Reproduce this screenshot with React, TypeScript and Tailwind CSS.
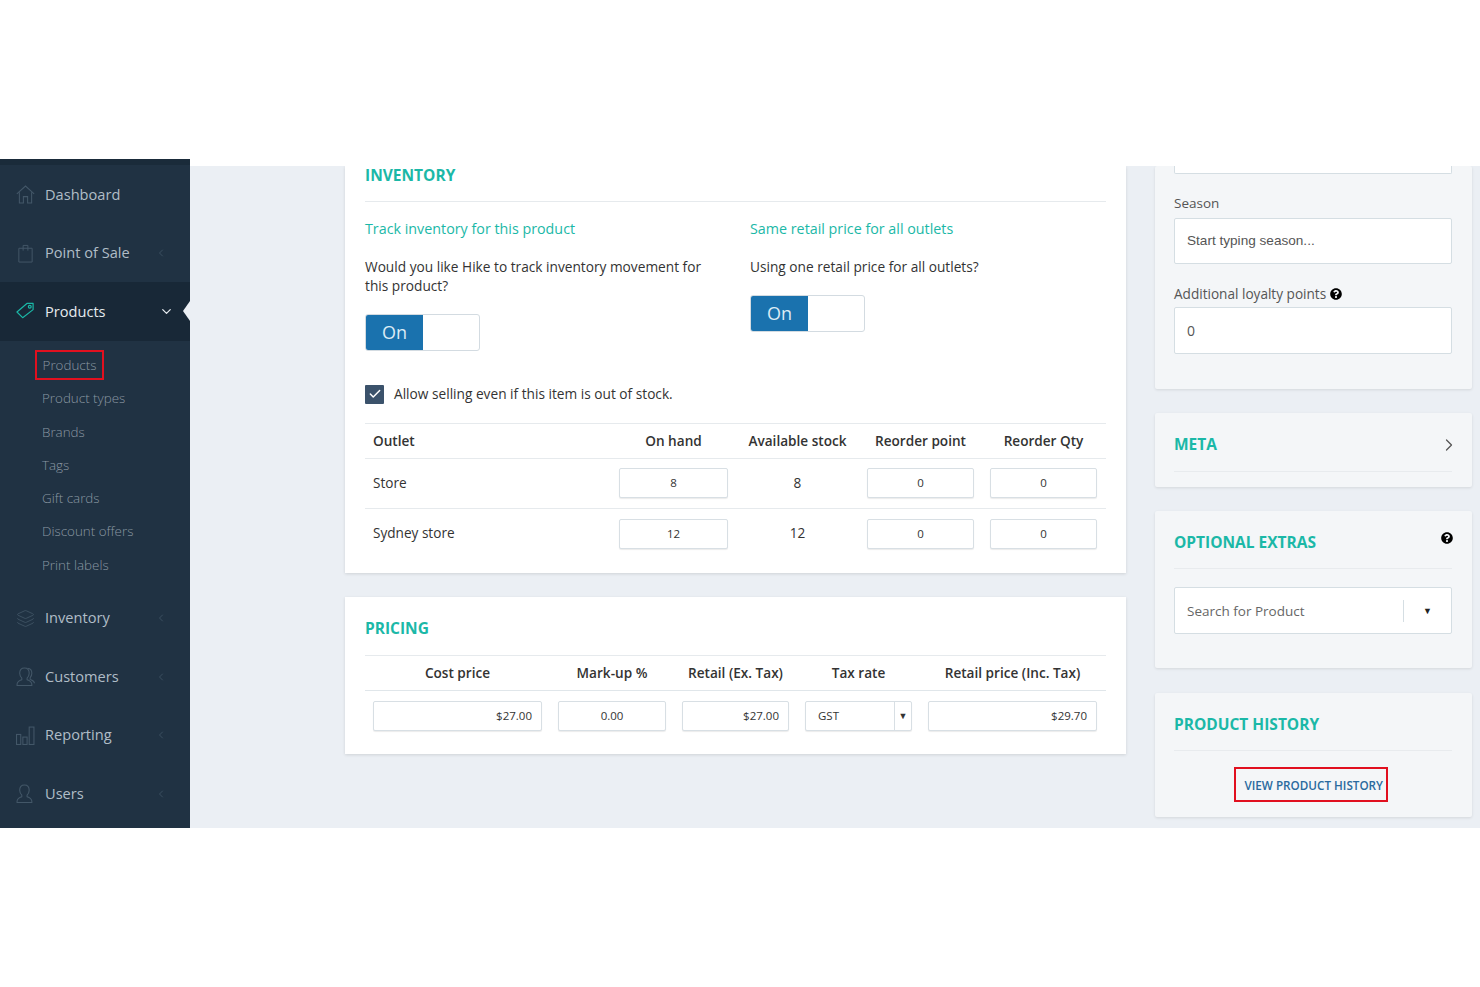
import { Check, ChevronDown, ChevronLeft, ChevronRight, Layers } from "lucide-react";
import { FaQuestionCircle } from "react-icons/fa";

function HouseIcon() {
  return (
    <svg viewBox="0 0 18 18" className="size-[19px]" fill="none" stroke="currentColor" strokeWidth="1">
      <path d="M.8 8.5 9 1l8.2 7.5" />
      <path d="M3.2 6.8V17H7v-6h4v6h3.8V6.8" />
    </svg>
  );
}

function BagIcon() {
  return (
    <svg viewBox="0 0 18 20" className="size-[19px]" fill="none" stroke="currentColor" strokeWidth="1">
      <path d="M2 4.5h14v14.5H2z" />
      <path d="M6.5 7V1.5h5V7" />
    </svg>
  );
}

function BarsIcon() {
  return (
    <svg viewBox="0 0 18 18" className="size-[19px]" fill="none" stroke="currentColor" strokeWidth="1">
      <rect x="0.5" y="8" width="4" height="9.5" />
      <rect x="6.5" y="10.5" width="4" height="7" />
      <rect x="12.5" y="1" width="4.5" height="16.5" />
    </svg>
  );
}

const personPath =
  "M8 1C5 1 3.5 3.3 3.5 6c0 2 1 3.6 2 4.6V12c-2 1-4.5 1.7-4.5 4.5v1h14v-1c0-2.8-2.5-3.5-4.5-4.5v-1.4c1-1 2-2.6 2-4.6C12.5 3.3 11 1 8 1z";

function PersonIcon() {
  return (
    <svg viewBox="0 0 18 18" className="size-[19px]" fill="none" stroke="currentColor" strokeWidth="1">
      <path d={personPath} />
    </svg>
  );
}

function PeopleIcon() {
  return (
    <svg viewBox="0 0 18 18" className="size-[19px]" fill="none" stroke="currentColor" strokeWidth="1">
      <path d={personPath} />
      <path d="M11 1.2c2.6.2 4 2.4 4 4.8 0 1.8-.8 3.2-1.6 4.2v1.5c1.2.6 4.1 1.3 4.1 3.8" />
    </svg>
  );
}

function TagIcon() {
  return (
    <svg viewBox="0 0 20 20" className="mr-[10px] size-[19px] text-[#1bb8a7]" fill="none" stroke="currentColor" strokeWidth="1.25">
      <path d="M1 10.5 11.5 1.5H18V8L7 16.5z" strokeLinejoin="round" />
      <circle cx="14.5" cy="5" r="1.5" />
    </svg>
  );
}

function NavItem({ icon, label, chevron = true }: { icon: React.ReactNode; label: string; chevron?: boolean }) {
  return (
    <div className="flex h-[58.5px] items-center pl-4 pr-[23px] pt-[1px]">
      <span className="flex w-[29px] text-[#435768]">{icon}</span>
      <span className="flex-1 text-[14.6px] text-[#b0bdc7]">{label}</span>
      {chevron && <ChevronLeft className="size-3 text-[#3b4f60]" />}
    </div>
  );
}

function Sidebar() {
  const subItems = ["Product types", "Brands", "Tags", "Gift cards", "Discount offers", "Print labels"];
  return (
    <aside className="w-[190px] shrink-0 bg-[#203243]">
      <div className="h-[6px] bg-[#1a2b3a]" />
      <NavItem icon={<HouseIcon />} label="Dashboard" chevron={false} />
      <NavItem icon={<BagIcon />} label="Point of Sale" />
      <div className="relative flex h-[59px] items-center bg-[#182837] pl-4 pr-[16px]">
        <TagIcon />
        <span className="flex-1 text-[14.6px] text-[#e6ebef]">Products</span>
        <ChevronDown className="size-[15px] text-[#e6ebef]" />
        <span className="absolute right-0 top-[19px] h-0 w-0 border-y-[10px] border-r-[7px] border-y-transparent border-r-[#ebeff4]" />
      </div>
      <div className="pb-[7px] pt-[7.5px] text-[13.4px] font-light text-[#8a97a2]">
        <div className="flex h-[33.25px] items-center pl-[35px]">
          <span className="flex h-[30px] w-[69px] items-center justify-center border-2 border-[#e1101f]">Products</span>
        </div>
        {subItems.map((item) => (
          <div key={item} className="flex h-[33.25px] items-center pl-[42px]">
            {item}
          </div>
        ))}
      </div>
      <NavItem icon={<Layers className="size-[19px]" strokeWidth={1} />} label="Inventory" />
      <NavItem icon={<PeopleIcon />} label="Customers" />
      <NavItem icon={<BarsIcon />} label="Reporting" />
      <NavItem icon={<PersonIcon />} label="Users" />
    </aside>
  );
}

function Toggle() {
  return (
    <div className="flex h-[37px] w-[115px] overflow-hidden rounded-[3px] border border-[#d3dbe1] bg-white">
      <div className="flex w-[57px] items-center justify-center bg-[#1a72ae] text-[18px] text-[#dcebf5]">On</div>
    </div>
  );
}

function CellInput({ value, align = "text-center" }: { value: string; align?: string }) {
  return (
    <div className={`mx-2 flex h-[30px] items-center rounded-[2px] border border-[#d8dfe4] bg-white px-[9px] text-[11.5px] text-[#333] shadow-[0_1px_1px_rgba(0,0,0,0.08)] ${align}`}>
      <span className="w-full">{value}</span>
    </div>
  );
}

function StockRow({ outlet, onHand }: { outlet: string; onHand: string }) {
  return (
    <div className="grid h-[50px] grid-cols-[246px_125px_123px_123px_123px] items-center border-b border-[#e6eaed] text-[13.6px] text-[#333]">
      <span className="pl-2">{outlet}</span>
      <CellInput value={onHand} />
      <span className="text-center">{onHand}</span>
      <CellInput value="0" />
      <CellInput value="0" />
    </div>
  );
}

function InventoryCard() {
  return (
    <section className="h-[407px] bg-white px-5 shadow-[0_1px_3px_rgba(0,0,0,0.12)]">
      <h2 className="flex h-[36px] items-center border-b border-[#e6eaed] pb-[18px] pt-[1px] text-[15.5px] font-bold leading-[16px] text-[#1bb8a7]">INVENTORY</h2>
      <div className="grid grid-cols-[385px_1fr] pt-[17px]">
        <div>
          <h3 className="text-[14.3px] leading-[19px] text-[#1bb8a7]">Track inventory for this product</h3>
          <p className="mt-[19px] w-[345px] text-[13.7px] leading-[19px] text-[#333]">
            Would you like Hike to track inventory movement for this product?
          </p>
          <div className="mt-[19px]">
            <Toggle />
          </div>
        </div>
        <div>
          <h3 className="text-[14.3px] leading-[19px] text-[#1bb8a7]">Same retail price for all outlets</h3>
          <p className="mt-[19px] text-[13.7px] leading-[19px] text-[#333]">Using one retail price for all outlets?</p>
          <div className="mt-[19px]">
            <Toggle />
          </div>
        </div>
      </div>
      <label className="mt-[33px] flex items-center gap-[10px] text-[13.7px] text-[#333]">
        <span className="flex size-[19px] items-center justify-center rounded-[1px] bg-[#3b526b]">
          <Check className="size-[14px] text-white" strokeWidth={2.5} />
        </span>
        Allow selling even if this item is out of stock.
      </label>
      <div className="mt-[18px] grid h-[36px] grid-cols-[246px_125px_123px_123px_123px] items-center border-y border-[#e6eaed] pt-[1px] text-center text-[13.6px] font-semibold text-[#333]">
        <span className="pl-2 text-left">Outlet</span>
        <span>On hand</span>
        <span>Available stock</span>
        <span>Reorder point</span>
        <span>Reorder Qty</span>
      </div>
      <StockRow outlet="Store" onHand="8" />
      <div className="[&>div]:border-b-0">
        <StockRow outlet="Sydney store" onHand="12" />
      </div>
    </section>
  );
}

function PricingCard() {
  return (
    <section className="mt-6 h-[157px] bg-white px-5 shadow-[0_1px_3px_rgba(0,0,0,0.12)]">
      <h2 className="flex h-[59px] items-center border-b border-[#e6eaed] pt-[6px] text-[15.5px] font-bold text-[#1bb8a7]">PRICING</h2>
      <div className="grid h-[35px] grid-cols-[185px_124px_123px_123px_185px] items-center border-b border-[#e0e6ea] text-center text-[13.6px] font-semibold text-[#333]">
        <span>Cost price</span>
        <span>Mark-up %</span>
        <span>Retail (Ex. Tax)</span>
        <span>Tax rate</span>
        <span>Retail price (Inc. Tax)</span>
      </div>
      <div className="grid grid-cols-[185px_124px_123px_123px_185px] pt-[10px]">
        <CellInput value="$27.00" align="text-right" />
        <CellInput value="0.00" />
        <CellInput value="$27.00" align="text-right" />
        <div className="mx-2 flex h-[30px] items-center rounded-[2px] border border-[#d8dfe4] bg-white text-[11.5px] text-[#333] shadow-[0_1px_1px_rgba(0,0,0,0.08)]">
          <span className="flex-1 pl-3">GST</span>
          <span className="flex h-full w-[17px] items-center justify-center border-l border-[#d8dfe4] text-[9px]">▼</span>
        </div>
        <CellInput value="$29.70" align="text-right" />
      </div>
    </section>
  );
}

function TextField({ value, className = "" }: { value: string; className?: string }) {
  return (
    <div className={`flex items-center rounded-[2px] border border-[#d5dee3] bg-white px-3 text-[#555] ${className}`}>{value}</div>
  );
}

function SidePanels() {
  const panel = "rounded-[2px] bg-[#f4f6f8] pl-[19px] pr-5 shadow-[0_1px_3px_rgba(0,0,0,0.1)]";
  const heading = "text-[15.5px] font-bold text-[#1bb8a7]";
  return (
    <div className="w-[317px] shrink-0">
      <section className={`${panel} h-[223px]`}>
        <div className="h-[8px] rounded-b-[2px] border-x border-b border-[#d5dee3] bg-white" />
        <label className="mt-[18px] block text-[13.5px] leading-[22px] text-[#555]">Season</label>
        <TextField value="Start typing season..." className="mt-[4px] h-[46px] font-['Liberation_Sans',sans-serif] text-[13.6px]" />
        <label className="mt-[19px] flex h-[22px] items-center gap-1 text-[13.6px] text-[#555]">
          Additional loyalty points <FaQuestionCircle className="size-3 text-black" />
        </label>
        <TextField value="0" className="mt-[2px] h-[47px] text-[14px]" />
      </section>
      <section className={`${panel} mt-6 h-[74px]`}>
        <div className="flex h-[59px] items-center justify-between border-b border-[#e8ebee] pt-[6px]">
          <h2 className={heading}>META</h2>
          <ChevronRight className="-mr-[7px] size-5 text-[#555]" strokeWidth={1.5} />
        </div>
      </section>
      <section className={`${panel} relative mt-6 h-[157px]`}>
        <div className="flex h-[58px] items-center border-b border-[#e8ebee] pt-[6px]">
          <h2 className={heading}>OPTIONAL EXTRAS</h2>
        </div>
        <FaQuestionCircle className="absolute right-[19px] top-[21px] size-3 text-black" />
        <div className="mt-[18px] flex h-[47px] items-center rounded-[2px] border border-[#d5dee3] bg-white pl-3 text-[13.5px] text-[#666]">
          <span className="flex-1 pt-[1px]">Search for Product</span>
          <span className="flex h-[22px] w-[48px] items-center justify-center border-l border-[#d5dee3] pt-[1px] text-[9px] text-[#222]">▼</span>
        </div>
      </section>
      <section className={`${panel} mt-[25px] h-[124px]`}>
        <div className="flex h-[58px] items-center border-b border-[#e8ebee] pt-[6px]">
          <h2 className={heading}>PRODUCT HISTORY</h2>
        </div>
        <div className="ml-[60px] mt-[16px] flex">
          <span className="flex h-[35px] w-[154px] items-center justify-end border-2 border-[#e1101f] pr-[3px] pt-[2px] text-[11.7px] font-semibold text-[#2a6a9e]">
            VIEW PRODUCT HISTORY
          </span>
        </div>
      </section>
    </div>
  );
}

export default function App() {
  return (
    <div className="h-[987px] bg-white pt-[159px] font-['Open_Sans',sans-serif]">
      <div className="flex h-[669px]">
        <Sidebar />
        <main className="mt-[7px] flex h-[662px] flex-1 gap-[29px] overflow-hidden bg-[#ebeff4] pl-[155px]">
          <div className="w-[781px] shrink-0">
            <InventoryCard />
            <PricingCard />
          </div>
          <SidePanels />
        </main>
      </div>
    </div>
  );
}
